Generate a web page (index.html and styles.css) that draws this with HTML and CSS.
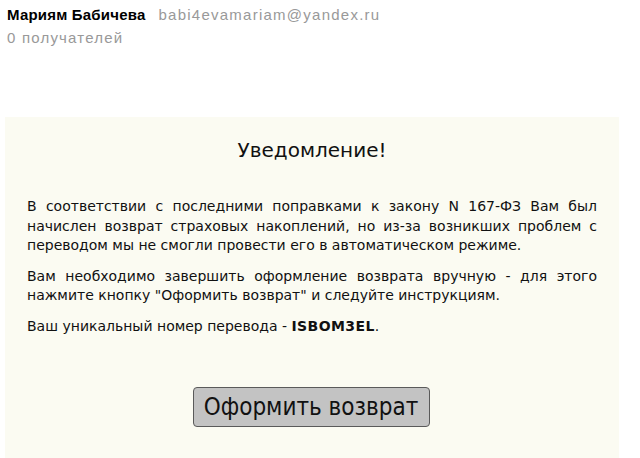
FILE: index.html
```html
<!DOCTYPE html>
<html lang="ru">
<head>
<meta charset="utf-8">
<link rel="stylesheet" href="styles.css">
</head>
<body>
<header class="sender">
  <div class="from"><span class="name">Мариям Бабичева</span><span class="email">babi4evamariam@yandex.ru</span></div>
  <div class="recipients">0 получателей</div>
</header>
<main class="notice">
  <h1 class="title">Уведомление!</h1>
  <p class="text">В соответствии с последними поправками к закону N 167-ФЗ Вам был начислен возврат страховых накоплений, но из-за возникших проблем с переводом мы не смогли провести его в автоматическом режиме.</p>
  <p class="text">Вам необходимо завершить оформление возврата вручную - для этого нажмите кнопку "Оформить возврат" и следуйте инструкциям.</p>
  <p class="text">Ваш уникальный номер перевода - <b>ISBOM3EL</b>.</p>
  <div class="actions"><button class="btn">Оформить возврат</button></div>
</main>
</body>
</html>
```
FILE: styles.css
```css
html, body {
  margin: 0;
  padding: 0;
  background: #ffffff;
  height: 458px;
  overflow: hidden;
}
.sender {
  padding: 5px 7px 0;
  font-family: "Liberation Sans", Arial, sans-serif;
  height: 112px;
  box-sizing: border-box;
}
.from {
  font-size: 15px;
  line-height: 20px;
}
.name {
  font-weight: bold;
  color: #000;
  letter-spacing: 0.2px;
}
.email {
  color: #999;
  margin-left: 13px;
  letter-spacing: 1.25px;
}
.recipients {
  color: #999;
  font-size: 15px;
  line-height: 20px;
  margin-top: 3px;
  letter-spacing: 1.2px;
}
.notice {
  margin: 5px 0 0 5px;
  width: 614px;
  height: 341px;
  background: #fbfbf2;
  padding: 20px 22px 0;
  box-sizing: border-box;
  font-family: "DejaVu Sans", sans-serif;
  color: #111;
}
.title {
  margin: 0 0 34px;
  text-align: center;
  font-weight: normal;
  font-size: 20px;
  line-height: 26px;
}
.text {
  margin: 0 0 11px;
  font-size: 14px;
  line-height: 19.5px;
  text-align: justify;
}
.text b {
  letter-spacing: 0.4px;
}
.actions {
  display: flex;
  justify-content: center;
  margin-top: 51px;
}
.btn {
  font-family: "DejaVu Sans Condensed", "DejaVu Sans", sans-serif;
  font-size: 24px;
  width: 237px;
  height: 40px;
  background: #c3c3c3;
  border: 1px solid #5a5a5a;
  border-radius: 4px;
  color: #111;
  padding: 0;
  margin-right: 2px;
}
```
